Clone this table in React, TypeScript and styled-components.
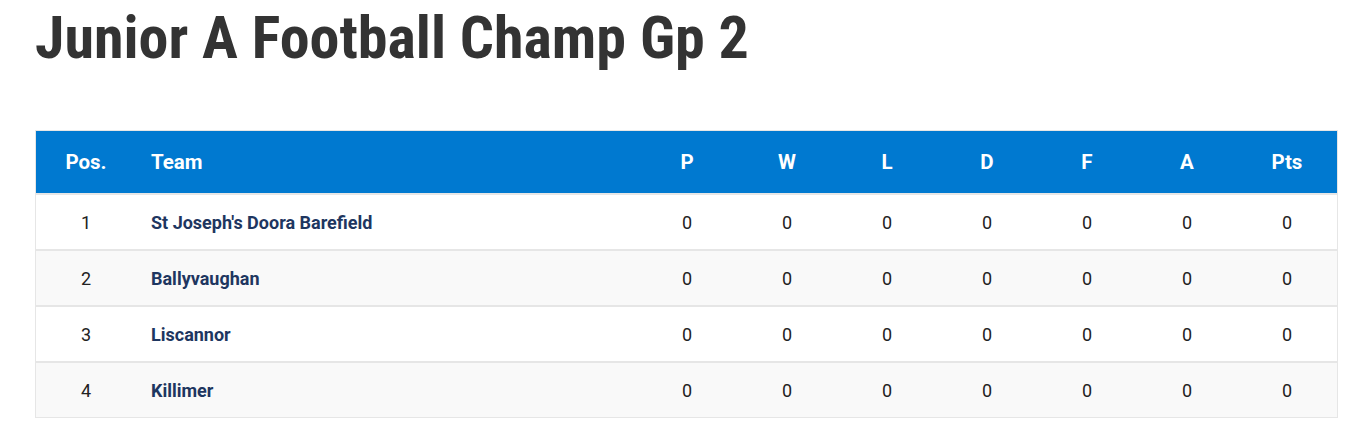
import React from 'react'
import styled, { createGlobalStyle } from 'styled-components'

const GlobalStyle = createGlobalStyle`
  body {
    margin: 0;
    background: #fff;
    font-family: Roboto, 'Liberation Sans', sans-serif;
  }
`

const Page = styled.div`
  padding: 0 25px 0 35px;
`

const Title = styled.h1`
  margin: 0;
  padding-top: 3px;
  height: 127px;
  font-family: 'Roboto Condensed', 'Liberation Sans Narrow', Roboto, sans-serif;
  font-weight: 700;
  font-size: 60px;
  line-height: 70px;
  color: #333;
`

const Table = styled.table`
  width: 1303px;
  border-collapse: collapse;
  border: 1px solid #e6e6e6;
`

const HeadCell = styled.th<{ $align?: string }>`
  height: 62px;
  padding: 0 0 0 ${(p) => (p.$align === 'left' ? '15px' : '0')};
  background: #0079d0;
  color: #fff;
  font-size: 20.5px;
  font-weight: 700;
  text-align: ${(p) => p.$align || 'center'};
`

const Row = styled.tr<{ $odd: boolean }>`
  background: ${(p) => (p.$odd ? '#f9f9f9' : '#fff')};
  border-top: 2px solid #e6e6e6;
`

const Cell = styled.td`
  height: 54px;
  padding: 0;
  width: 100px;
  text-align: center;
  font-size: 18px;
  color: #222;
`

const TeamCell = styled.td`
  padding: 0 0 0 15px;
  font-size: 18px;
  font-weight: 700;
  color: #1e3660;
`

const teams = ["St Joseph's Doora Barefield", 'Ballyvaughan', 'Liscannor', 'Killimer']
const stats = ['P', 'W', 'L', 'D', 'F', 'A', 'Pts']

export default function App() {
  return (
    <Page>
      <GlobalStyle />
      <Title>Junior A Football Champ Gp 2</Title>
      <Table>
        <thead>
          <tr>
            <HeadCell style={{ width: 100 }}>Pos.</HeadCell>
            <HeadCell $align="left">Team</HeadCell>
            {stats.map((s) => (
              <HeadCell key={s} style={{ width: 100 }}>
                {s}
              </HeadCell>
            ))}
          </tr>
        </thead>
        <tbody>
          {teams.map((t, i) => (
            <Row key={t} $odd={i % 2 === 1}>
              <Cell>{i + 1}</Cell>
              <TeamCell>{t}</TeamCell>
              {stats.map((s) => (
                <Cell key={s}>0</Cell>
              ))}
            </Row>
          ))}
        </tbody>
      </Table>
    </Page>
  )
}
